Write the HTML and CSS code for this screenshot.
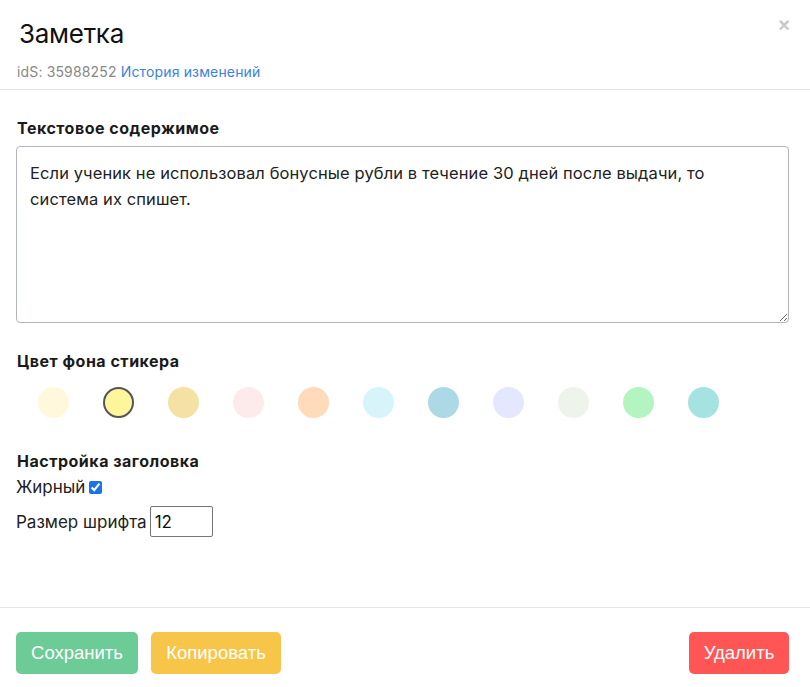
FILE: index.html
```html
<!DOCTYPE html>
<html lang="ru">
<head>
<meta charset="utf-8">
<link rel="stylesheet" href="styles.css">
</head>
<body>
<div class="modal">
  <div class="modal-header">
    <h1 class="title">Заметка</h1>
    <button class="close" type="button">×</button>
    <div class="meta">idS: 35988252 <a class="history" href="#">История изменений</a></div>
  </div>
  <div class="modal-body">
    <div class="section-label">Текстовое содержимое</div>
    <textarea class="content">Если ученик не использовал бонусные рубли в течение 30 дней после выдачи, то система их спишет.</textarea>
    <div class="section-label colors-label">Цвет фона стикера</div>
    <div class="swatches">
      <span class="swatch c1"></span>
      <span class="swatch c2 selected"></span>
      <span class="swatch c3"></span>
      <span class="swatch c4"></span>
      <span class="swatch c5"></span>
      <span class="swatch c6"></span>
      <span class="swatch c7"></span>
      <span class="swatch c8"></span>
      <span class="swatch c9"></span>
      <span class="swatch c10"></span>
      <span class="swatch c11"></span>
    </div>
    <div class="section-label heading-label">Настройка заголовка</div>
    <label class="row bold-row">Жирный <input type="checkbox" checked></label>
    <label class="row size-row">Размер шрифта <input class="size" type="text" value="12"></label>
  </div>
  <div class="modal-footer">
    <button class="btn save" type="button">Сохранить</button>
    <button class="btn copy" type="button">Копировать</button>
    <span class="spacer"></span>
    <button class="btn delete" type="button">Удалить</button>
  </div>
</div>
</body>
</html>
```
FILE: styles.css
```css
html, body {
  margin: 0;
  padding: 0;
  background: #fff;
}
body {
  font-family: Inter, "Noto Sans", sans-serif;
  color: #1a1a1a;
}
.modal {
  width: 810px;
  height: 687px;
  display: flex;
  flex-direction: column;
}
.modal-header {
  position: relative;
  padding: 18px 16px 7px 17px;
  border-bottom: 1px solid #e4e4e4;
}
.title {
  margin: 0 0 0 2px;
  font-size: 26px;
  font-weight: 400;
  line-height: 32px;
  color: #111;
  letter-spacing: -0.3px;
}
.close {
  position: absolute;
  top: 15px;
  right: 20px;
  border: 0;
  background: none;
  padding: 0;
  font-size: 20px;
  line-height: 20px;
  color: #c8c8c8;
  font-family: "Liberation Sans", sans-serif;
  font-weight: 700;
}
.meta {
  margin-top: 12px;
  font-size: 14px;
  line-height: 20px;
  color: #888;
  letter-spacing: 0.15px;
}
.history {
  color: #3b82e0;
  text-decoration: none;
}
.modal-body {
  padding: 27px 21px 0 16px;
  flex: 1;
  display: flex;
  flex-direction: column;
  align-items: flex-start;
}
.section-label {
  font-size: 16px;
  font-weight: 700;
  line-height: 22px;
  margin-left: 1px;
  letter-spacing: 0.5px;
}
.content {
  margin-top: 7px;
  width: 773px;
  height: 177px;
  box-sizing: border-box;
  border: 1px solid #b4b2c8;
  border-radius: 4px;
  padding: 13px 13px;
  font-family: Inter, "Noto Sans", sans-serif;
  font-size: 16.5px;
  letter-spacing: 0.1px;
  line-height: 26px;
  color: #222;
  resize: vertical;
  outline: none;
}
.colors-label {
  margin-top: 27px;
}
.swatches {
  display: flex;
  gap: 34px;
  padding-left: 22px;
  margin-top: 15px;
}
.swatch {
  width: 31px;
  height: 31px;
  border-radius: 50%;
  box-sizing: border-box;
}
.swatch.selected {
  border: 2px solid #555;
}
.c1 { background: #fff8dc; }
.c2 { background: #fff59d; }
.c3 { background: #f5e1a4; }
.c4 { background: #fdebeb; }
.c5 { background: #ffdabb; }
.c6 { background: #d7f4fa; }
.c7 { background: #add8e6; }
.c8 { background: #e3e8ff; }
.c9 { background: #eef4ea; }
.c10 { background: #b4f4c0; }
.c11 { background: #a5e2e2; }
.heading-label {
  margin-top: 32px;
}
.row {
  font-size: 17px;
  line-height: 22px;
  display: flex;
  align-items: center;
  gap: 4px;
  color: #222;
}
.bold-row {
  margin-top: 4px;
}
.bold-row input {
  margin: 0;
  width: 13px;
  height: 13px;
  accent-color: #1a73e8;
}
.size-row {
  margin-top: 8px;
}
.size {
  width: 63px;
  height: 31px;
  box-sizing: border-box;
  border: 1px solid #767676;
  border-radius: 2px;
  padding: 0 4px;
  font-family: Inter, "Noto Sans", sans-serif;
  font-size: 17px;
  color: #111;
  margin-left: -1px;
}
.modal-footer {
  border-top: 1px solid #e4e4e4;
  padding: 24px 21px 13px 16px;
  display: flex;
  gap: 13px;
}
.spacer {
  flex: 1;
}
.btn {
  height: 42px;
  border: 0;
  border-radius: 5px;
  color: #fff;
  font-family: "Liberation Sans", Arial, sans-serif;
  font-size: 18.5px;
  padding: 0 12px;
}
.save { background: #6ccb96; width: 122px; }
.copy { background: #f7c548; width: 130px; }
.delete { background: #ff5555; width: 100px; }
```
